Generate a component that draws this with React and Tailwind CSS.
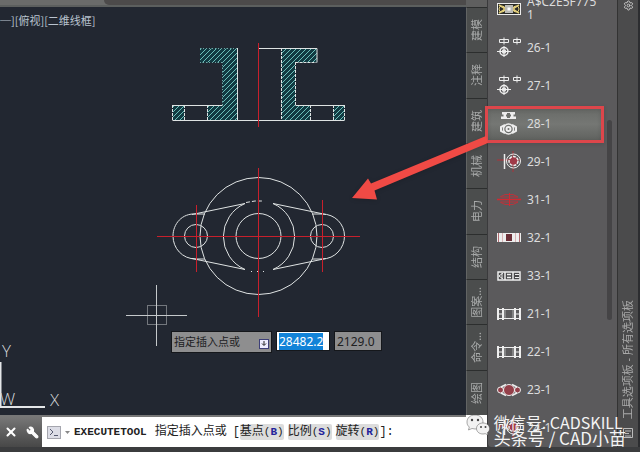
import React, { useEffect, useRef } from 'react';
import { Settings, Wrench, X } from 'lucide-react';

const TABS = ['建模', '注释', '建筑', '机械', '电力', '结构', '图案...', '命令...', '绘图'];

const TOOLS = [
  { name: '26-1', icon: 'target' },
  { name: '27-1', icon: 'target' },
  { name: '28-1', icon: 'flange', active: true },
  { name: '29-1', icon: 'wheel' },
  { name: '31-1', icon: 'axis' },
  { name: '32-1', icon: 'block' },
  { name: '33-1', icon: 'shaft' },
  { name: '21-1', icon: 'frame' },
  { name: '22-1', icon: 'frame' },
  { name: '23-1', icon: 'lug' },
  { name: '24-1', icon: 'wheel' },
];

const OPTIONS = [
  { label: '基点', key: 'B' },
  { label: '比例', key: 'S' },
  { label: '旋转', key: 'R' },
];

// 45 degree hatch lines, clipped to the cut faces of the section view
const HATCH = Array.from({ length: 52 }, (_, i) => `M${90 + i * 5} 125l80-80`).join('');

const ToolIcon = ({ type }) => (
  <svg viewBox="0 0 24 24" className="w-6 h-6 shrink-0" fill="none" stroke="#eee" strokeWidth="1">
    {type === 'plate' && (
      <>
        <rect x="0.5" y="6.5" width="23" height="11" fill="#2b2b28" />
        <path d="M2 8l5 3v2l-5 3M22 8l-5 3v2l5 3" stroke="#e3cf7c" strokeWidth="1.5" />
        <circle cx="5" cy="12" r="3" stroke="#e3cf7c" />
        <circle cx="19" cy="12" r="3" stroke="#e3cf7c" />
        <rect x="8" y="8" width="8" height="8" fill="#b9b9b5" stroke="none" />
        <rect x="10.5" y="10.5" width="3" height="3" fill="#fff" stroke="none" />
      </>
    )}
    {type === 'target' && (
      <>
        <path d="M2.5 3.5h9v3h-9zM7 1.5v7M16.5 3.5h7v3h-7zM20 1.5v7" />
        <circle cx="7" cy="15.5" r="4" strokeWidth="1.5" />
        <circle cx="7" cy="15.5" r="1.5" strokeWidth="1.5" />
        <path d="M0 15.5h14M7 10v11" />
      </>
    )}
    {type === 'flange' && (
      <>
        <path d="M5 0h5v2.5h-1v2h1v2.5H4V4.5h2.5v-2H5zM13 0h5v2.5h-1.5v2H19V7h-6V4.5h1v-2h-1z" fill="#eee" stroke="none" />
        <path d="M9 0.5h5M9 6.5h5" />
        <path d="M8 13l-4 2v4l4 2M15 13l4 2v4l-4 2" strokeWidth="2" />
        <circle cx="11.5" cy="17" r="5" strokeWidth="1.5" />
        <circle cx="11.5" cy="17" r="2" strokeWidth="2" />
      </>
    )}
    {type === 'wheel' && (
      <>
        <path d="M0 10h24M16 1v21" stroke="#b03038" />
        <path d="M7.5 4v15" strokeWidth="1.5" />
        <circle cx="16.5" cy="11" r="7" />
        <circle cx="16.5" cy="11" r="4.5" fill="#a03a48" strokeWidth="1.5" strokeDasharray="3 1" />
      </>
    )}
    {type === 'axis' && (
      <g stroke="#d02a32">
        <path d="M0 11.5h24" strokeWidth="1.5" />
        <path d="M12.5 5v13" />
        <path d="M3 9l5-2.5h8L21 9M3 14l5 2.5h8l5-2.5M4 9h17M4 14h17" strokeWidth="0.8" />
      </g>
    )}
    {type === 'block' && (
      <>
        <rect x="0" y="7" width="24" height="9" fill="#eee" stroke="none" />
        <path d="M1.5 7v9M22.5 7v9" stroke="#b06a70" />
        <path d="M5.5 7v9M18.5 7v9" stroke="#d8b4b6" />
        <rect x="9" y="8" width="6" height="7" fill="#6c3038" stroke="none" />
      </>
    )}
    {type === 'shaft' && (
      <>
        <rect x="1" y="8" width="22" height="8" fill="#49494b" strokeWidth="1.5" />
        <path d="M8 8v8M16 8v8M10 10.5h4M10 13.5h4" strokeWidth="1.5" />
        <path d="M6 9l-4 3 4 3M18 10.5h4M18 13.5h4M5 9v6" />
      </>
    )}
    {type === 'frame' && (
      <>
        <path d="M1 6v12M6 6v12M18 6v12M23 6v12" strokeWidth="2" />
        <path d="M0 7.5h24M0 16.5h24M1 12h5M18 12h5" />
        <path d="M8 8v8M16 8v8" stroke="#aaa" />
      </>
    )}
    {type === 'lug' && (
      <>
        <circle cx="3.5" cy="12" r="3" fill="#94404a" />
        <circle cx="20.5" cy="12" r="3" fill="#94404a" />
        <path d="M4 9l5-2.5M20 9l-5-2.5M4 15l5 2.5M20 15l-5 2.5" strokeWidth="1.5" />
        <circle cx="12" cy="12" r="5.5" fill="#94404a" />
      </>
    )}
  </svg>
);

const Drawing = () => (
  <svg viewBox="0 6 466 409" className="absolute left-0 bottom-0 w-[466px] h-[409px]" fill="none" stroke="#dfe3e3">
    <defs>
      <clipPath id="cut">
        <path d="M200 48.5h37v72h-29.5V105h15V62.500H200z" />
        <path d="M173 105h11.5v15.5H173z" />
        <path d="M281.5 48.5h35.5v14h-21.5V105h15v15.5h-29z" />
        <path d="M333.5 105h11v15.5h-11z" />
      </clipPath>
    </defs>

    {/* Section view */}
    <g clipPath="url(#cut)">
      <rect x="170" y="45" width="180" height="80" fill="#123a42" stroke="none" />
      <path d={HATCH} stroke="#6cc0ba" />
    </g>
    <path d="M237.5 48v72.5M172.5 120.5h172M172.5 105.5h50M258.5 48.5h58.5M295.5 105.5h49M317 48.5v14" />
    <path d="M172.5 105v15M184.5 105v15M207.5 105v15M281.5 48v72M295.5 62v43M310.5 105v15M333.5 105v15M344.5 105v15M295.5 62.5h21" strokeDasharray="3 1" />
    <path d="M222.5 62v43M200 62.5h22M200 48.5h37" stroke="#6fa5a5" strokeDasharray="1 2" />

    {/* Plan view */}
    <circle cx="258.5" cy="236" r="58.5" />
    <circle cx="258.5" cy="236" r="22.5" />
    <path d="M245 203.5A36 36 0 0 0 245 269.5M273 203.5A36 36 0 0 1 273 269.5" />
    <path d="M205 214h-9C182 213 173 224 173 236s9 23 23 23h9M312 214h10c13 0 22.5 10 22.5 22s-9.5 23-22.5 23h-10" />
    <circle cx="196" cy="236" r="11.5" />
    <circle cx="322" cy="236" r="11.5" />
    <path d="M192 214.5L245 203.5M273 203.5L326 214.5M192 258.5L245 269.5M273 269.5L326 258.5" />
    <path d="M246 202.5l9-1.5h8" strokeDasharray="4 2" />
    <path d="M251 271.5h16" strokeDasharray="1 5" />

    {/* Centre lines */}
    <path d="M258.5 43v84M258.5 168v149M157 236.5h203M196.5 205v67M322.5 200v72" stroke="#c8202c" />

    {/* Cursor */}
    <path d="M126 315.5h61M156.5 285v61" stroke="#c5c9cb" />
    <rect x="147.5" y="305.5" width="19" height="19" stroke="#c5c9cb" strokeDasharray="1 1" />

    {/* UCS icon */}
    <path d="M0.5 362v45M0 407h45" stroke="#e4e6e8" strokeWidth="2" />
    <g fill="#d4d7da" stroke="none" fontSize="17" className="font-['Open_Sans',sans-serif] font-light">
      <text x="2" y="357">Y</text>
      <text x="50" y="406">X</text>
      <text x="0" y="405">W</text>
    </g>
  </svg>
);

const DynamicInput = () => {
  const first = useRef(null);

  useEffect(() => {
    first.current.focus();
    first.current.select();
  }, []);

  return (
    <div className="absolute left-[171px] top-[324px] flex items-start gap-1 text-xs text-[#20201f] font-['Noto_Sans','Noto_Sans_CJK_SC',sans-serif]">
      <label htmlFor="px" className="flex items-center justify-between w-[101px] h-[22px] pl-[2px] pr-[2px] bg-[#8e8e8f] border border-[#15171b] text-[11px]">
        指定插入点或
        <span className="flex items-center justify-center w-[10px] h-[10px] mt-1 bg-[#eef] border border-[#3d3f78]">
          <svg viewBox="0 0 8 8" className="w-2 h-2" fill="none" stroke="#222">
            <path d="M4 1v4M2 3.5l2 2 2-2" />
          </svg>
        </span>
      </label>
      <input
        id="px"
        ref={first}
        defaultValue="28482.2"
        className="w-[54px] h-[20px] px-[2px] bg-white border border-[#15171b] text-black text-xs outline-none selection:bg-[#1283d8] selection:text-white"
      />
      <input
        aria-label="Y"
        defaultValue="2129.0"
        className="w-[48px] h-[20px] px-[2px] bg-[#8e8e8f] border border-[#15171b] text-xs outline-none"
      />
    </div>
  );
};

const CommandLine = () => (
  <div className="flex h-8 shrink-0 bg-white border-t-2 border-[#777] font-['Liberation_Mono','Noto_Sans_CJK_SC',monospace] text-xs text-[#222]">
    <div className="flex items-center w-[42px] shrink-0 gap-2 pl-1 text-white bg-linear-to-b from-[#777] to-[#484848]">
      <button aria-label="关闭">
        <X className="w-[14px] h-[14px]" strokeWidth={3.5} />
      </button>
      <button aria-label="自定义">
        <Wrench className="w-[13px] h-[13px] -scale-x-100" fill="currentColor" />
      </button>
    </div>
    <div className="flex items-center pl-[5px] whitespace-nowrap">
      <button aria-label="最近使用的命令" className="flex items-center gap-1">
        <svg viewBox="0 0 14 13" className="w-[14px] h-[13px]" fill="none" stroke="#555a70">
          <rect x="0.5" y="0.5" width="13" height="12" fill="#dcdde6" stroke="#a5a6ae" />
          <path d="M3 3l3 3-3 3M7 9.5h4" />
        </svg>
        <svg viewBox="0 0 5 3" className="w-[5px] h-[3px]" fill="#888">
          <path d="M0 0h5L2.5 3z" />
        </svg>
      </button>
      <span className="ml-1 text-[11px] font-bold">EXECUTETOOL</span>
      <span className="ml-2">指定插入点或</span>
      <span className="ml-[6px]">[</span>
      <div className="flex gap-1">
        {OPTIONS.map((o) => (
          <button key={o.key} className="h-4 rounded-xs bg-[#dcdcdc] leading-4">
            {o.label}
            <span className="text-[11px]">
              (<b className="text-[#23239a]">{o.key}</b>)
            </span>
          </button>
        ))}
      </div>
      <span>]:</span>
    </div>
  </div>
);

const Palette = () => (
  <aside className="flex w-[174px] shrink-0 text-[#dcdcdc] font-['Noto_Sans','Noto_Sans_CJK_SC',sans-serif]">
    <div className="flex flex-col w-[21px] shrink-0 bg-white">
      <div className="h-[7px] shrink-0 bg-[#5f5f5f]" />
      {TABS.map((tab) => (
        <button
          key={tab}
          className="flex items-center justify-center w-full flex-1 max-h-[46px] border-t border-l border-t-[#2c2e2e] border-l-[#626464] bg-[#4b4d4d] text-[#a9abab] text-[11px]"
        >
          <span className="rotate-180 whitespace-nowrap [writing-mode:vertical-rl] [text-orientation:sideways]">{tab}</span>
        </button>
      ))}
      <div className="h-[32px] shrink-0" />
    </div>

    <div className="flex flex-1 min-w-0 bg-[#5b5a5c] border-l border-[#3a3a3c] rounded-bl-sm overflow-hidden">
      <ul className="flex flex-col justify-start flex-1 min-w-0 h-[446px] text-xs">
        <li className="flex items-end shrink-0 h-[29px] gap-[6px] pl-[9px]">
          <div className="mb-2">
            <ToolIcon type="plate" />
          </div>
          <span className="mb-2 leading-[13px]">
            A$C2E5F775
            <br />1
          </span>
        </li>
        {TOOLS.map((tool) => (
          <li key={tool.name} className="shrink-0 h-[38px] py-[2px]">
            <button
              className={
                tool.active
                  ? 'flex items-center w-full h-full gap-[6px] pl-[9px] bg-linear-to-b from-[#676966] via-[#757774] to-[#5f615e]'
                  : 'flex items-center w-full h-full gap-[6px] pl-[9px]'
              }
            >
              <ToolIcon type={tool.icon} />
              {tool.name}
            </button>
          </li>
        ))}
      </ul>
      <div className="w-[14px] shrink-0 pt-[120px] pl-1">
        <div className="w-[5px] h-[200px] rounded-sm bg-[#454446]" />
      </div>
    </div>

    <div className="flex flex-col items-center justify-end w-[21px] shrink-0 bg-[#4b4b4c] border-l border-[#333] text-[#aaa]">
      <button aria-label="特性" className="mb-auto">
        <Settings className="w-[11px] h-[11px] text-[#ccc]" />
      </button>
      <span className="rotate-180 whitespace-nowrap text-[11px] [writing-mode:vertical-rl] [text-orientation:sideways]">工具选项板 - 所有选项板</span>
      <svg viewBox="0 0 12 12" className="w-3 h-3 mt-2 mb-2" fill="none" stroke="#bbb">
        <path d="M1.5 1.5h9v9h-9zM3 4h6M3 6.5h4M3 9h6" />
      </svg>
    </div>
    <div className="w-[2px] shrink-0 bg-[#2c2d30]" />
  </aside>
);

const Callout = () => (
  <svg viewBox="350 100 260 110" className="absolute right-[30px] top-[100px] w-[260px] h-[110px] pointer-events-none drop-shadow-sm">
    <rect x="486.5" y="107.5" width="116" height="34" fill="none" stroke="#dd464b" strokeWidth="3" />
    <path d="M486 136L371 183.500L368 178.500L352 198L377 199.500L374.500 190.500L488 143z" fill="#f04a45" />
  </svg>
);

const Watermark = () => (
  <div className="absolute right-[14px] bottom-[6px] flex items-start gap-1 text-[#f4f4f4] font-['Noto_Sans_CJK_SC',sans-serif] whitespace-nowrap pointer-events-none">
    <svg viewBox="0 0 24 22" className="w-6 h-[22px]" fill="#f2f2f2" stroke="#555" strokeWidth="0.5">
      <path d="M9 1c5 0 8 3 8 7s-3 7-8 7l-3-.5L2.500 16l.8-3C1.500 11.500 1 10 1 8c0-4 3-7 8-7z" />
      <path d="M17 9c4 0 6.500 2.500 6.500 5.500 0 2-.8 3.200-2 4l.5 2.500-2.700-1.300L17 20c-4 0-6.500-2.500-6.500-5.500S13 9 17 9z" />
      <g fill="#444" stroke="none">
        <circle cx="6" cy="6" r="1.2" />
        <circle cx="12" cy="6" r="1.2" />
        <circle cx="15" cy="13" r="1" />
        <circle cx="19.5" cy="13" r="1" />
      </g>
    </svg>
    <div className="flex flex-col">
      <span className="text-base leading-4">微信号: CADSKILL</span>
      <span className="text-[17px] leading-4">头条号 / CAD小苗</span>
    </div>
  </div>
);

export default function App() {
  return (
    <div className="relative flex flex-col h-screen overflow-hidden bg-[#3f4041]">
      <div className="flex flex-1 min-h-0">
        <main className="flex flex-col flex-1 min-w-0">
          <div className="flex h-[7px] shrink-0 bg-[#6a6b6a] border-b-2 border-[#5c5f5e]">
            <div className="w-[104px]" />
            <div className="flex-1 rounded-bl-md bg-[#4c4a4a]" />
          </div>
          <div className="relative flex-1 min-h-0 overflow-hidden bg-[#222731]">
            <div className="pt-[5px] text-[11px] leading-4 text-[#b9c3cf] font-['Noto_Sans_CJK_SC',sans-serif]">─][俯视][二维线框]</div>
            <Drawing />
            <DynamicInput />
          </div>
          <CommandLine />
        </main>
        <Palette />
      </div>
      <div className="h-[5px] shrink-0 bg-[#3b3c3e]" />
      <Callout />
      <Watermark />
    </div>
  );
}
